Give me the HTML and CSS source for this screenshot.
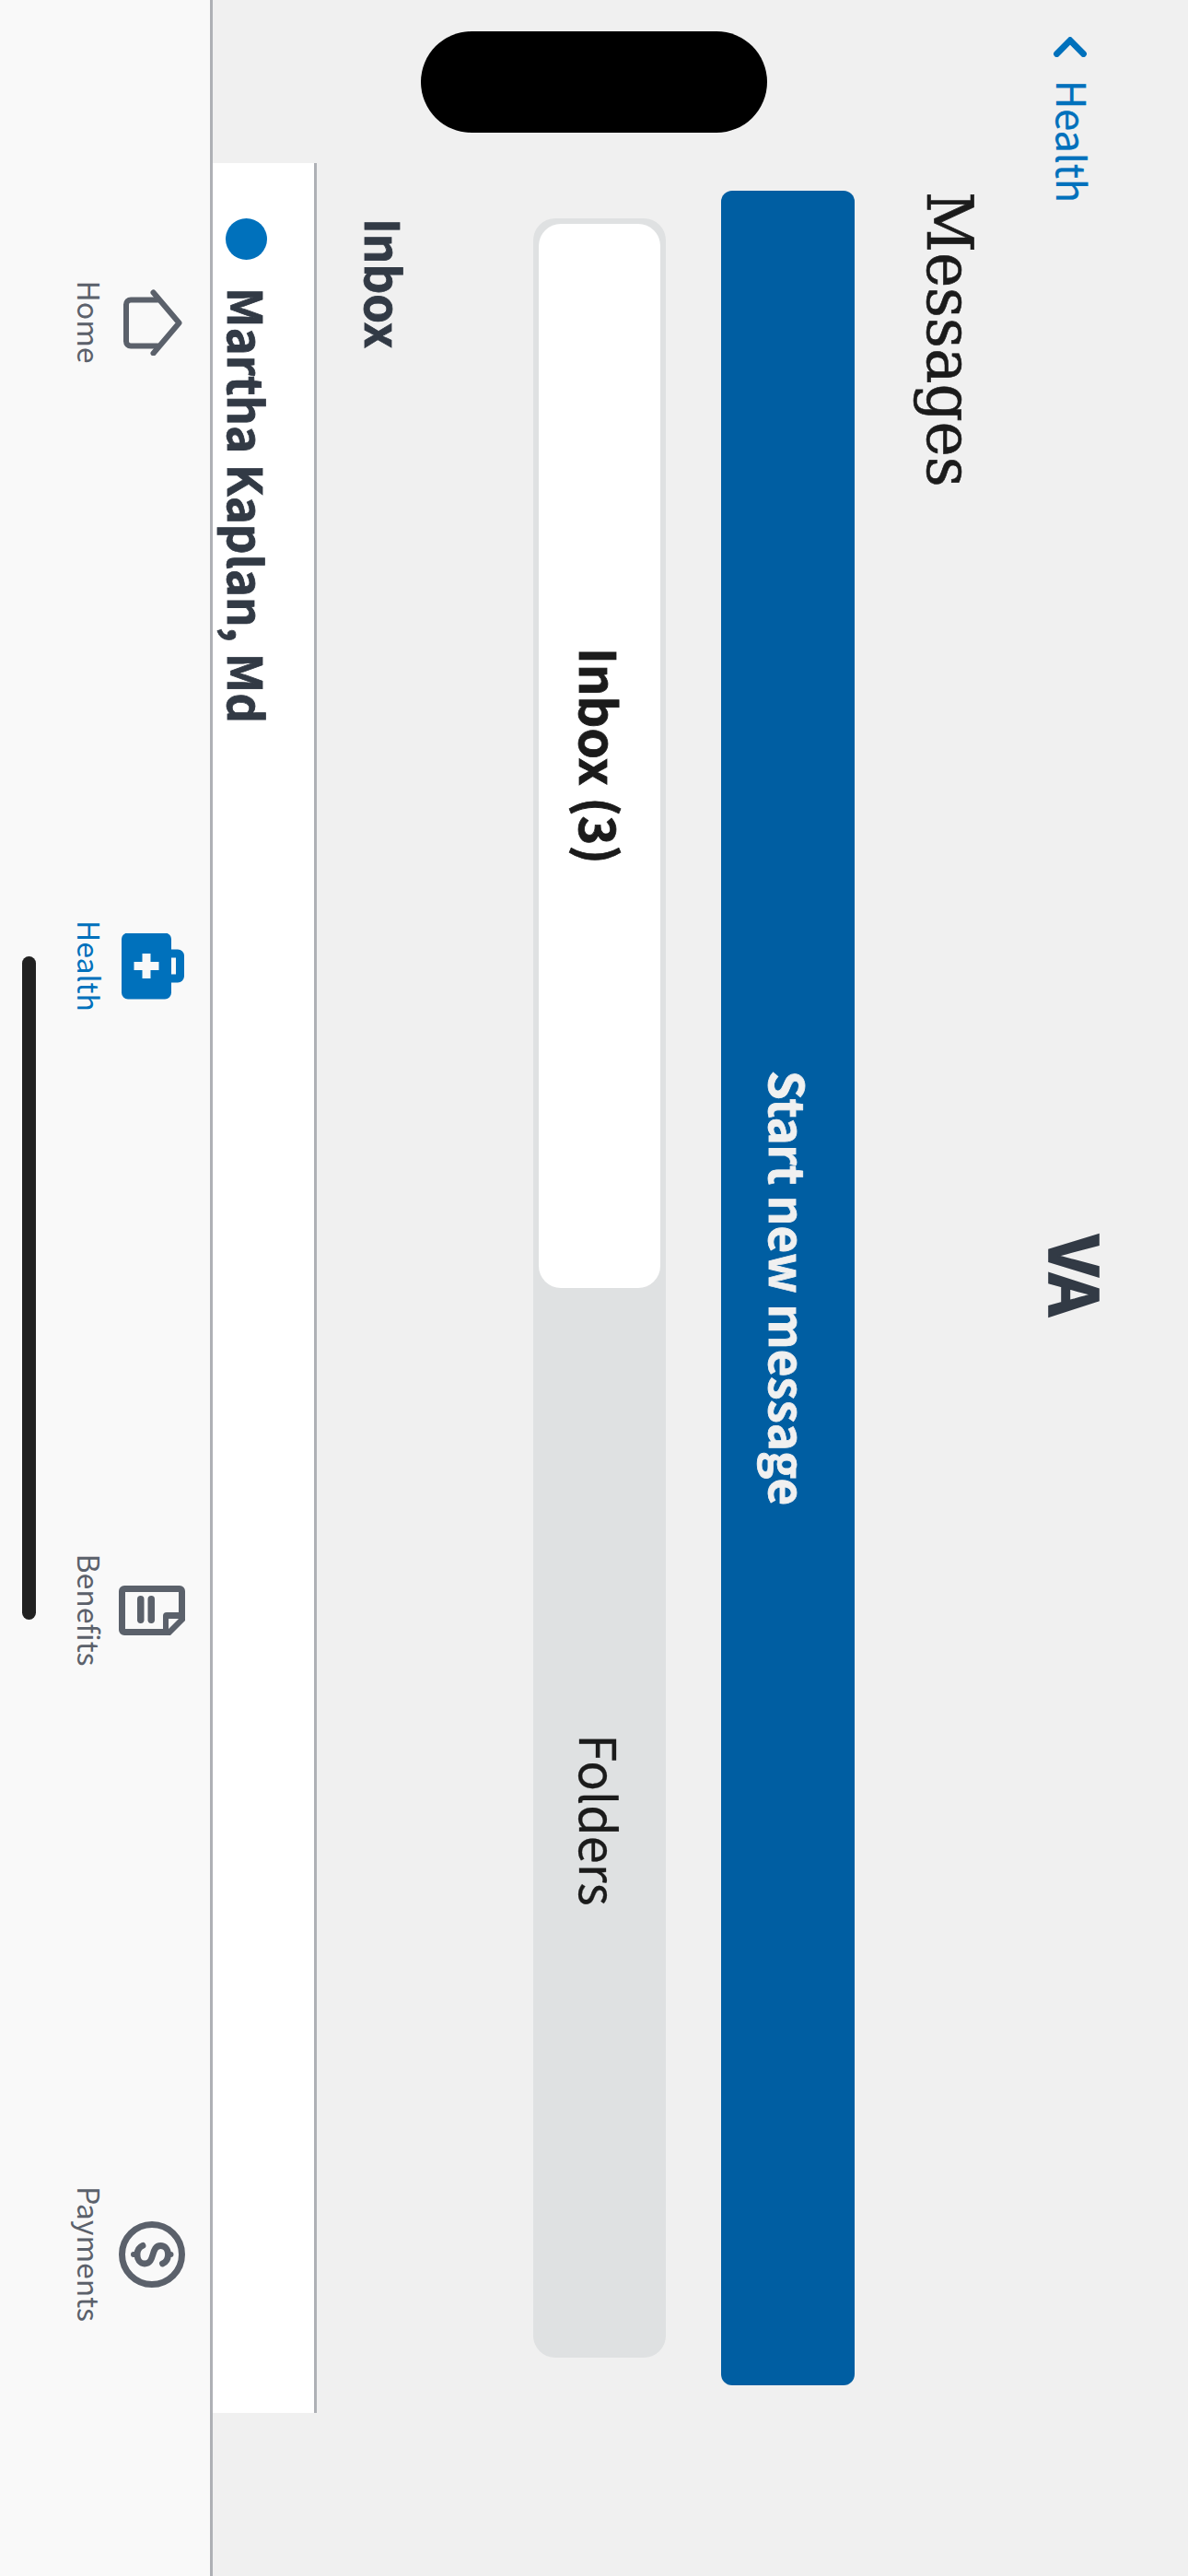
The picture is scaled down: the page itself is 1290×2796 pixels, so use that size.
FILE: index.html
```html
<!DOCTYPE html>
<html lang="en">
<head>
<meta charset="utf-8">
<title>Messages</title>
<link rel="stylesheet" href="styles.css">
</head>
<body>
<div class="stage">
<div class="screen">
  <header class="topbar">
    <a class="back">
      <svg class="chevron" width="22" height="38" viewBox="0 0 22 38"><path d="M18.500 4.500 3.800 19 18.500 33.500" fill="none" stroke="currentColor" stroke-width="6.800" stroke-linecap="round" stroke-linejoin="miter"/></svg>
      <span class="back-label">Health</span>
    </a>
    <div class="brand"><span class="brand-text">VA</span></div>
  </header>
  <main class="content">
    <h1 class="title"><span>Messages</span></h1>
    <button class="primary"><span>Start new message</span></button>
    <div class="segments">
      <div class="segment segment-on"><span>Inbox (3)</span></div>
      <div class="segment"><span>Folders</span></div>
    </div>
    <h2 class="section"><span>Inbox</span></h2>
    <div class="list">
      <div class="row"><i class="unread"></i><span class="sender">Martha Kaplan, Md</span></div>
    </div>
  </main>
  <nav class="tabs">
    <a class="tab">
      <svg width="72" height="72" viewBox="0 0 72 72" fill="none" stroke="currentColor" stroke-width="6" stroke-linecap="round" stroke-linejoin="round"><path d="M3.500 34.500 36.500 6.500 69.500 34.500"/><path d="M11.500 30V59a5 5 0 0 0 5 5h40a5 5 0 0 0 5-5V30"/></svg>
      <span class="tab-label">Home</span>
    </a>
    <a class="tab tab-on">
      <svg width="72" height="72" viewBox="0 0 72 72" fill="currentColor" fill-rule="evenodd"><path transform="translate(-0.500 1)" d="M18 14V7a7 7 0 0 1 7-7h22a7 7 0 0 1 7 7v7h11a7 7 0 0 1 7 7v40a7 7 0 0 1-7 7H7a7 7 0 0 1-7-7V21a7 7 0 0 1 7-7zM27 9v5h18v-5zM31.500 27.500v9h-9v9h9v9h9v-9h9v-9h-9v-9z"/></svg>
      <span class="tab-label">Health</span>
    </a>
    <a class="tab">
      <svg width="72" height="72" viewBox="0 0 72 72" fill="currentColor"><path fill-rule="evenodd" d="M15 0H47L63 16V66a6 6 0 0 1-6 6H15a6 6 0 0 1-6-6V6a6 6 0 0 1 6-6zM16 7V65H56V24H42a4 4 0 0 1-4-4V7zM45 7V18H56z"/><rect x="20" y="33" width="30" height="7.500" rx="3.700"/><rect x="20" y="44.500" width="30" height="7.500" rx="3.700"/></svg>
      <span class="tab-label">Benefits</span>
    </a>
    <a class="tab">
      <svg width="72" height="72" viewBox="0 0 72 72" fill="none" stroke="currentColor" stroke-width="7"><circle cx="36" cy="36" r="32.500"/><path d="M46 24.500C44 19.500 40 18.500 36 18.500C30 18.500 26.500 22 26.500 26.500C26.500 38 46 32 46 44C46 49 41.500 52 36 52C31 52 28 50 26.300 46" stroke-width="6.800" stroke-linecap="round"/><path d="M36 17V15.500M36 54V56" stroke-width="6" stroke-linecap="round"/></svg>
      <span class="tab-label">Payments</span>
    </a>
  </nav>
  <div class="island"></div>
  <div class="home-bar"></div>
</div>
</div>
</body>
</html>
```
FILE: styles.css
```css
* { box-sizing: border-box; }
body {
  margin: 0;
  background: #f0f0f0;
}
.stage {
  width: 1290px;
  height: 2796px;
  overflow: hidden;
}
/* Landscape layout, turned a quarter clockwise */
.screen {
  position: relative;
  display: flex;
  flex-direction: column;
  width: 2796px;
  height: 1290px;
  transform-origin: 0 0;
  transform: translateX(1290px) rotate(90deg);
  background: #f0f0f0;
  color: #1b1b1b;
  font-family: "Noto Sans CJK JP", "Noto Sans", sans-serif;
  line-height: 1;
}
.topbar {
  display: grid;
  grid-template-columns: 1fr auto 1fr;
  height: 207px;
  padding: 0 69px 0 40px;
}
.back {
  display: flex;
  gap: 25px;
  padding-top: 109px;
  color: #0071bc;
}
.back-label { margin-top: -4px; font-size: 43px; line-height: 38px; -webkit-text-stroke: 0.3px; }
.brand {
  padding-top: 78px;
  color: #323a45;
  font-size: 73px;
  font-weight: 700;
  line-height: 83px;
  letter-spacing: -2px;
  -webkit-text-stroke: 1.6px;
}
.brand-text { display: block; }
.content { display: flex; flex-direction: column; height: 852px; padding: 0 177px; }
.title {
  margin: 6px 0 56px 31px;
  font-family: "DejaVu Serif Condensed", "DejaVu Serif", serif;
  font-stretch: condensed;
  font-weight: 400;
  font-size: 69px;
  line-height: 93px;
  transform: scaleX(1.037);
  transform-origin: 0 0;
  -webkit-text-stroke: 0.6px;
}
.primary {
  height: 145px;
  margin: 0 30px;
  padding: 0;
  border: 0;
  border-radius: 12px;
  background: #005ea2;
  color: #f0f0f0;
  font: 700 51px/143px "Noto Sans CJK JP", "Noto Sans", sans-serif;
  -webkit-text-stroke: 0.8px;
}
.primary span { display: block; height: 145px; }
.segments {
  display: flex;
  height: 144px;
  margin: 60px 60px 0;
  padding: 6px;
  border-radius: 24px;
  background: #dfe1e2;
  font-size: 54px;
  line-height: 129px;
  text-align: center;
}
.segment { flex: 1; border-radius: 24px; -webkit-text-stroke: 0.3px; }
.segment-on { background: #fff; font-weight: 700; -webkit-text-stroke: 0.8px; }
.section {
  height: 235px;
  margin: 0;
  padding: 126px 60px 0;
  color: #323a45;
  font-size: 51px;
  line-height: 70px;
  -webkit-text-stroke: 0.8px;
}
.list { height: 113px; border-top: 3px solid #aeb0b5; background: #fff; }
.row { display: flex; align-items: center; gap: 30px; height: 147px; padding-left: 60px; }
.unread { width: 45px; height: 45px; border-radius: 50%; background: #0071bc; }
.sender { margin-top: -3px; color: #323a45; font-size: 51px; font-weight: 700; -webkit-text-stroke: 0.8px; }
.tabs {
  display: grid;
  grid-template-columns: repeat(4, 1fr);
  height: 231px;
  border-top: 3px solid #aeb0b5;
  background: #f9f9f9;
}
.tab {
  display: flex;
  flex-direction: column;
  align-items: center;
  gap: 11px;
  padding-top: 27px;
  color: #5b616b;
}
.tab-on { color: #0071bc; }
.tab-label { font-size: 32px; line-height: 40px; }
.island {
  position: absolute;
  left: 33.5px;
  top: 457px;
  width: 110.5px;
  height: 376px;
  border-radius: 56px;
  background: #000;
}
.home-bar {
  position: absolute;
  left: 1038px;
  top: 1251px;
  width: 720px;
  height: 15px;
  border-radius: 8px;
  background: #212121;
}
```
